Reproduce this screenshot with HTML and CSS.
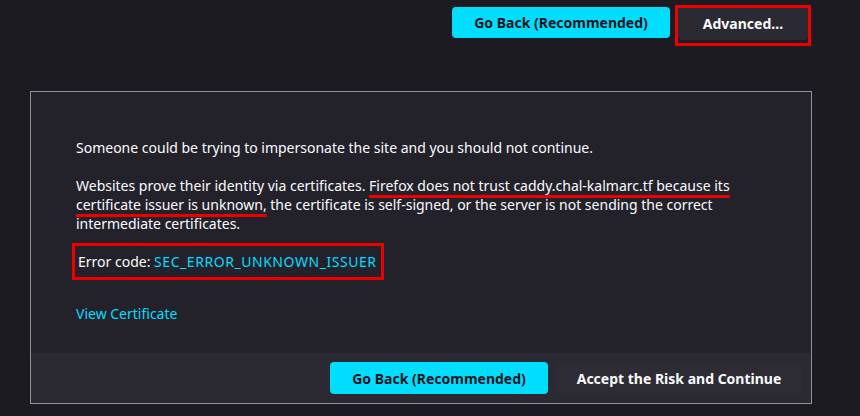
FILE: index.html
```html
<!DOCTYPE html>
<html lang="en">
<head>
<meta charset="utf-8">
<title>Warning: Potential Security Risk Ahead</title>
<link rel="stylesheet" href="styles.css">
</head>
<body>
<div class="topbar">
  <button class="btn btn-primary">Go Back (Recommended)</button>
  <div class="mark mark-adv"><button class="btn btn-secondary">Advanced…</button></div>
</div>
<section class="panel">
  <div class="panel-body">
    <p>Someone could be trying to impersonate the site and you should not continue.</p>
    <p>Websites prove their identity via certificates. <span class="redline">Firefox does not trust caddy.chal-kalmarc.tf because its certificate issuer is unknown,</span> the certificate is self-signed, or the server is not sending the correct intermediate certificates.</p>
    <p><span class="mark mark-code">Error code: <a class="link code" href="#">SEC_ERROR_UNKNOWN_ISSUER</a></span></p>
    <p class="viewcert"><a class="link" href="#">View Certificate</a></p>
  </div>
  <div class="panel-footer">
    <button class="btn btn-primary">Go Back (Recommended)</button>
    <button class="btn btn-secondary btn-accept">Accept the Risk and Continue</button>
  </div>
</section>
</body>
</html>
```
FILE: styles.css
```css
html, body {
  margin: 0;
  padding: 0;
  background: #1c1b22;
  color: #fbfbfe;
  font-family: "Noto Sans", "Open Sans", sans-serif;
  font-size: 14px;
}
.topbar {
  display: flex;
  justify-content: flex-end;
  align-items: flex-start;
  gap: 8px;
  padding: 7px 52px 0 0;
  height: 38px;
  box-sizing: border-box;
}
.btn {
  font-family: inherit;
  font-size: 14px;
  font-weight: 700;
  border: none;
  border-radius: 4px;
  height: 31px;
  padding: 0;
  white-space: nowrap;
  cursor: pointer;
}
.btn-primary {
  background: #00ddff;
  color: #15141a;
  width: 218px;
}
.btn-secondary {
  background: #2b2a33;
  color: #fbfbfe;
}
.mark {
  outline: 3px solid #ee0000;
}
.mark-adv {
  display: flex;
  margin-top: 1px;
  padding: 0 0 3px 0;
}
.mark-adv .btn {
  width: 130px;
  height: 33px;
  margin-top: -1px;
}
.panel {
  margin: 53px 0 0 30px;
  width: 782px;
  height: 313px;
  box-sizing: border-box;
  border: 1px solid #8f8f9d;
  background: #23222b;
  display: flex;
  flex-direction: column;
}
.panel-body {
  flex: 1;
  padding: 46px 46px 0 45px;
}
.panel-body p {
  margin: 0 0 19px 0;
  line-height: 19px;
}
.panel-body p.viewcert {
  margin-top: 33px;
}
.redline {
  text-decoration: underline;
  text-decoration-color: #ee0000;
  text-decoration-thickness: 2.5px;
  text-underline-offset: 4px;
}
.mark-code {
  padding: 6px 4px 6px 3px;
  margin-left: -1px;
}
.link {
  color: #00ddff;
  text-decoration: none;
}
.link.code {
  letter-spacing: 0.55px;
}
.panel-footer {
  height: 50px;
  background: #2b2a33;
  display: flex;
  justify-content: flex-end;
  align-items: center;
  gap: 8px;
  padding: 0 9px 0 0;
}
.panel-footer .btn {
  height: 32px;
}
.panel-footer .btn-accept {
  width: 246px;
  background: #2d2c35;
}
```
